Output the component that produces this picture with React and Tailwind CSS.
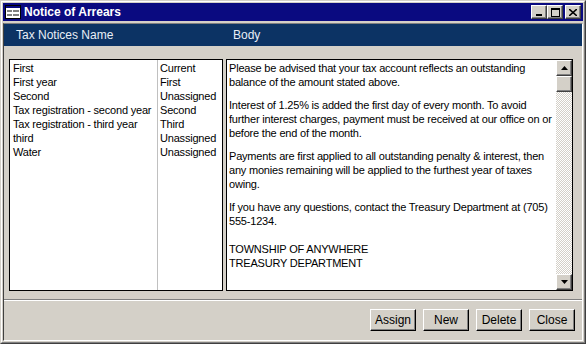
import { useState } from 'react'

const notices = [
  ['First', 'Current'],
  ['First year', 'First'],
  ['Second', 'Unassigned'],
  ['Tax registration - second year', 'Second'],
  ['Tax registration - third year', 'Third'],
  ['third', 'Unassigned'],
  ['Water', 'Unassigned'],
]

const raised =
  'border border-t-white border-l-white border-r-[#404040] border-b-[#404040] shadow-[inset_-1px_-1px_0_#808080] bg-[#d4d0c8]'

function CaptionButton({ children, className = '' }) {
  return (
    <div className={`flex h-[14px] w-[16px] items-center justify-center ${raised} ${className}`}>
      {children}
    </div>
  )
}

function Arrow({ up }) {
  return (
    <svg width="7" height="4" viewBox="0 0 7 4">
      {up
        ? <path d="M3.5 0 L7 4 L0 4 Z" fill="#000" />
        : <path d="M0 0 L7 0 L3.5 4 Z" fill="#000" />}
    </svg>
  )
}

export default function App() {
  const [selected] = useState(null)

  return (
    <div className="h-[344px] w-[586px] border border-t-[#d4d0c8] border-l-[#d4d0c8] border-r-[#404040] border-b-[#404040] bg-[#d4d0c8] font-['Liberation_Sans',Arial,sans-serif] text-[11px] text-black">
      <div className="flex h-full flex-col border border-t-white border-l-white border-r-[#808080] border-b-[#808080] p-[1px]">

        {/* ── title bar ── */}
        <div className="flex h-[18px] items-center bg-[#0a0a80] pl-[2px] pr-[2px]">
          <svg width="16" height="14" viewBox="0 0 16 14" className="mr-[3px]">
            <rect x="0.5" y="0.5" width="15" height="13" fill="#fff" stroke="#000" />
            <rect x="1" y="1" width="14" height="2" fill="#0a0a80" />
            <rect x="2" y="5" width="5" height="2" fill="#808080" />
            <rect x="8" y="5" width="6" height="2" fill="#808080" />
            <rect x="2" y="9" width="5" height="2" fill="#808080" />
            <rect x="8" y="9" width="6" height="2" fill="#808080" />
          </svg>
          <span className="text-[12px] font-bold leading-none text-white">Notice of Arrears</span>
          <div className="ml-auto flex items-center">
            <CaptionButton>
              <div className="mt-[6px] h-[2px] w-[6px] bg-black" />
            </CaptionButton>
            <CaptionButton>
              <div className="h-[9px] w-[9px] border border-t-2 border-black" />
            </CaptionButton>
            <CaptionButton className="ml-[2px]">
              <svg width="8" height="7" viewBox="0 0 8 7">
                <path d="M0 0 L8 7 M8 0 L0 7" stroke="#000" strokeWidth="1.6" />
              </svg>
            </CaptionButton>
          </div>
        </div>

        {/* ── client area ── */}
        <div className="mt-[2px] flex flex-1 flex-col border border-t-[#808080] border-l-[#404040] border-r-white border-b-white">
          <div className="flex h-[22px] items-center bg-[#0c3364] text-[12px] text-[#e8eef6]">
            <span className="w-[219px] pl-[12px]">Tax Notices Name</span>
            <span className="pl-[10px]">Body</span>
          </div>

          <div className="mt-[13px] flex h-[232px] gap-[3px] pl-[5px] pr-[9px] tracking-[-0.2px]">
            <div className="w-[214px] border border-black bg-white">
              <div className="flex h-full">
                <div className="w-[148px] border-r border-[#c0c0c0] pl-[3px] pt-[1px]">
                  {notices.map(([name]) => (
                    <div key={name} className="h-[14px] whitespace-nowrap leading-[14px]">{name}</div>
                  ))}
                </div>
                <div className="pl-[2px] pt-[1px]">
                  {notices.map(([name, step]) => (
                    <div key={name} className={`h-[14px] leading-[14px] ${selected === name ? 'bg-[#0a246a] text-white' : ''}`}>{step}</div>
                  ))}
                </div>
              </div>
            </div>

            <div className="flex flex-1 border border-black bg-white">
              <div className="flex-1 pl-[2px] pt-[1px] leading-[14px]">
                <p>Please be advised that your tax account reflects an outstanding balance of the amount stated above.</p>
                <p className="mt-[9px]">Interest of 1.25% is added the first day of every month. To avoid further interest charges, payment must be received at our office on or before the end of the month.</p>
                <p className="mt-[9px]">Payments are first applied to all outstanding penalty &amp; interest, then any monies remaining will be applied to the furthest year of taxes owing.</p>
                <p className="mt-[9px]">If you have any questions, contact the Treasury Department at (705) 555-1234.</p>
                <p className="mt-[14px]">TOWNSHIP OF ANYWHERE<br />TREASURY DEPARTMENT</p>
              </div>
              <div className="flex w-[16px] flex-col bg-[repeating-conic-gradient(#d4d0c8_0_25%,#ffffff_0_50%)] bg-[length:2px_2px]">
                <div className={`flex h-[16px] items-center justify-center ${raised}`}><Arrow up /></div>
                <div className={`h-[16px] ${raised}`} />
                <div className="flex-1" />
                <div className={`flex h-[16px] items-center justify-center ${raised}`}><Arrow /></div>
              </div>
            </div>
          </div>

          <div className="mt-[8px] border-t border-b border-t-[#808080] border-b-white" />

          <div className="mt-[8px] flex justify-end gap-[7px] pr-[7px]">
            {['Assign', 'New', 'Delete', 'Close'].map(label => (
              <button
                key={label}
                className="flex h-[22px] w-[46px] items-center justify-center border border-t-white border-l-white border-r-black border-b-black bg-[#d4d0c8] text-[12px] shadow-[inset_-1px_-1px_0_#808080]"
              >
                {label}
              </button>
            ))}
          </div>
        </div>
      </div>
    </div>
  )
}
